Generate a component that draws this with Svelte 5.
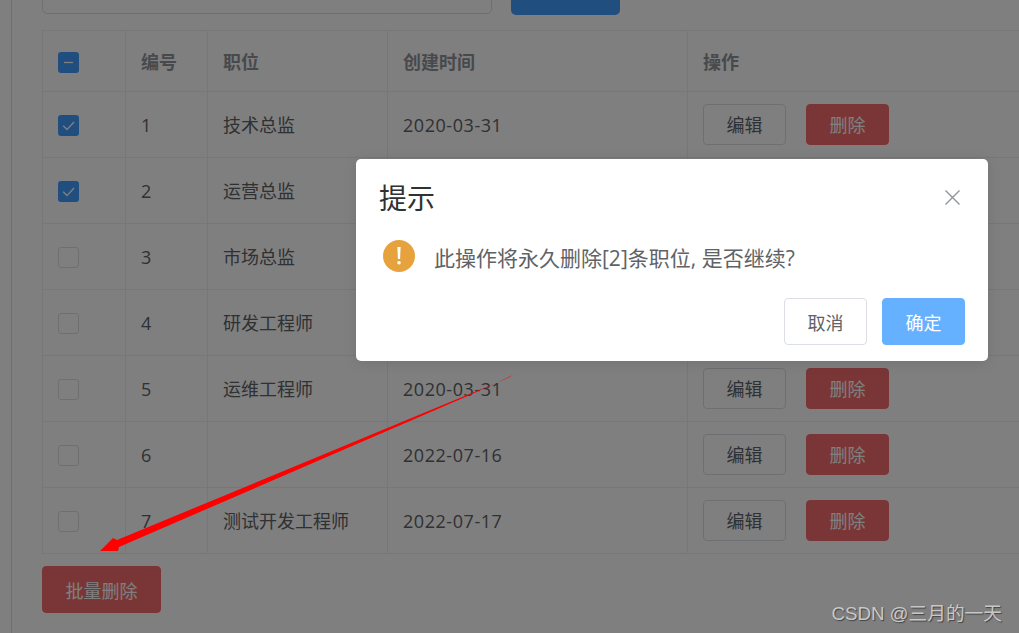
<script>
  const rows = [
    { id: 1, name: "技术总监", date: "2020-03-31", checked: true },
    { id: 2, name: "运营总监", date: "2020-03-31", checked: true },
    { id: 3, name: "市场总监", date: "2020-03-31", checked: false },
    { id: 4, name: "研发工程师", date: "2020-03-31", checked: false },
    { id: 5, name: "运维工程师", date: "2020-03-31", checked: false },
    { id: 6, name: "", date: "2022-07-16", checked: false },
    { id: 7, name: "测试开发工程师", date: "2022-07-17", checked: false }
  ];
</script>

<div class="page">
  <div class="content">
    <div class="toolbar">
      <div class="search"></div>
      <div class="add"></div>
    </div>

    <table>
      <thead>
        <tr>
          <th class="c-check">
            <span class="box on">
              <svg viewBox="0 0 21 21" width="21" height="21"><path d="M6 10.5h9" stroke="#fff" stroke-width="1.3" /></svg>
            </span>
          </th>
          <th class="c-id">编号</th>
          <th class="c-name">职位</th>
          <th class="c-date">创建时间</th>
          <th class="c-op">操作</th>
        </tr>
      </thead>
      <tbody>
        {#each rows as row}
          <tr>
            <td>
              {#if row.checked}
                <span class="box on">
                  <svg viewBox="0 0 21 21" width="21" height="21"><path d="M5.2 10.8l3.8 3.8 7-7.6" fill="none" stroke="#fff" stroke-width="1.4" /></svg>
                </span>
              {:else}
                <span class="box"></span>
              {/if}
            </td>
            <td class="num">{row.id}</td>
            <td>{row.name}</td>
            <td class="num">{row.date}</td>
            <td>
              <div class="ops">
                <button class="btn small">编辑</button>
                <button class="btn small danger">删除</button>
              </div>
            </td>
          </tr>
        {/each}
      </tbody>
    </table>

    <button class="btn bulk danger">批量删除</button>
  </div>

  <div class="overlay"></div>

  <div class="dialog">
    <div class="dialog-head">
      <span class="title">提示</span>
      <svg class="close" viewBox="0 0 15 15" width="15" height="15"><path d="M0.5 0.5l14 14M14.5 0.5l-14 14" stroke="#909399" stroke-width="1.4" /></svg>
    </div>
    <div class="dialog-body">
      <svg viewBox="0 0 32 32" width="32" height="32">
        <circle cx="16" cy="16" r="16" fill="#e6a23c" />
        <path d="M14.4 7h3.2l-.5 12h-2.2z" fill="#fff" />
        <circle cx="16" cy="22.8" r="1.8" fill="#fff" />
      </svg>
      <span class="message">此操作将永久删除[2]条职位, 是否继续?</span>
    </div>
    <div class="dialog-foot">
      <button class="btn">取消</button>
      <button class="btn primary">确定</button>
    </div>
  </div>

  <svg class="arrow" viewBox="0 0 1019 633" width="1019" height="633">
    <path d="M513 375L508 378L117 540L113 538L100 551L118 551L119 547L470 395z" fill="#f00" />
  </svg>

  <span class="mark">CSDN @三月的一天</span>
</div>

<style>
  :global(body) {
    overflow: hidden;
  }
  .page {
    position: relative;
    width: 1019px;
    height: 633px;
    overflow: hidden;
    background: #fff;
    font-family: "Open Sans", "Noto Sans CJK SC", sans-serif;
    font-size: 18px;
    color: #606266;
  }
  .content {
    margin-left: 11px;
    padding-left: 30px;
    height: 700px;
    margin-top: -27px;
    border-left: 1px solid #dcdfe6;
  }
  .toolbar {
    display: flex;
    gap: 19px;
    height: 57px;
  }
  .search {
    width: 448px;
    height: 39px;
    border: 1px solid #dcdfe6;
    border-radius: 5px;
  }
  .add {
    width: 109px;
    height: 42px;
    background: #409eff;
    border-radius: 5px;
  }
  table {
    border-collapse: collapse;
    table-layout: fixed;
    width: 1200px;
  }
  th,
  td {
    border: 1px solid #ebeef5;
    padding: 0 0 0 15px;
    text-align: left;
    height: 65px;
    line-height: 24px;
  }
  th {
    height: 58px;
    padding-top: 2px;
    color: #909399;
    font-weight: 700;
  }
  .num {
    letter-spacing: 0.55px;
  }
  .c-check {
    width: 67px;
  }
  .c-id {
    width: 66px;
  }
  .c-name {
    width: 164px;
  }
  .c-date {
    width: 284px;
  }
  .box {
    display: block;
    box-sizing: border-box;
    width: 21px;
    height: 21px;
    margin-top: 2px;
    border: 1px solid #dcdfe6;
    border-radius: 3px;
  }
  th .box {
    margin-top: 0;
  }
  .box.on {
    border: 0;
    background: #409eff;
  }
  .box svg {
    display: block;
  }
  .ops {
    display: flex;
    gap: 20px;
  }
  .btn {
    box-sizing: border-box;
    width: 83px;
    height: 47px;
    padding: 0;
    background: #fff;
    border: 1px solid #dcdfe6;
    border-radius: 4px;
    font: inherit;
    color: #606266;
  }
  .btn.small {
    height: 41px;
  }
  .btn.danger {
    background: #f56c6c;
    border-color: #f56c6c;
    color: #fff;
  }
  .btn.primary {
    background: #66b1ff;
    border-color: #66b1ff;
    color: #fff;
  }
  .btn.bulk {
    display: block;
    width: 119px;
    margin: 12px 0 0 0;
  }
  .overlay {
    position: absolute;
    inset: 0;
    background: rgba(0, 0, 0, 0.5);
  }
  .dialog {
    position: absolute;
    left: 356px;
    top: 159px;
    box-sizing: border-box;
    width: 632px;
    height: 202px;
    padding: 20px 23px 16px;
    background: #fff;
    border-radius: 5px;
    box-shadow: 0 2px 14px rgba(0, 0, 0, 0.1);
  }
  .dialog-head {
    display: flex;
    align-items: center;
    justify-content: space-between;
    height: 37px;
  }
  .title {
    font-size: 28px;
    margin-bottom: 2px;
    color: #303133;
  }
  .close {
    margin-right: 5px;
  }
  .dialog-body {
    display: flex;
    align-items: center;
    gap: 19px;
    margin: 24px 0 0 4px;
    height: 32px;
  }
  .message {
    font-size: 21px;
    margin-top: 1px;
  }
  .dialog-foot {
    display: flex;
    justify-content: flex-end;
    gap: 15px;
    margin-top: 26px;
  }
  .arrow {
    position: absolute;
    left: 0;
    top: 0;
  }
  .mark {
    position: absolute;
    right: 17px;
    top: 598px;
    font-family: "Liberation Sans", "Noto Sans CJK SC", sans-serif;
    font-size: 18.7px;
    color: #c8c8c8;
    text-shadow: 1px 1px 1px #444;
  }
</style>
